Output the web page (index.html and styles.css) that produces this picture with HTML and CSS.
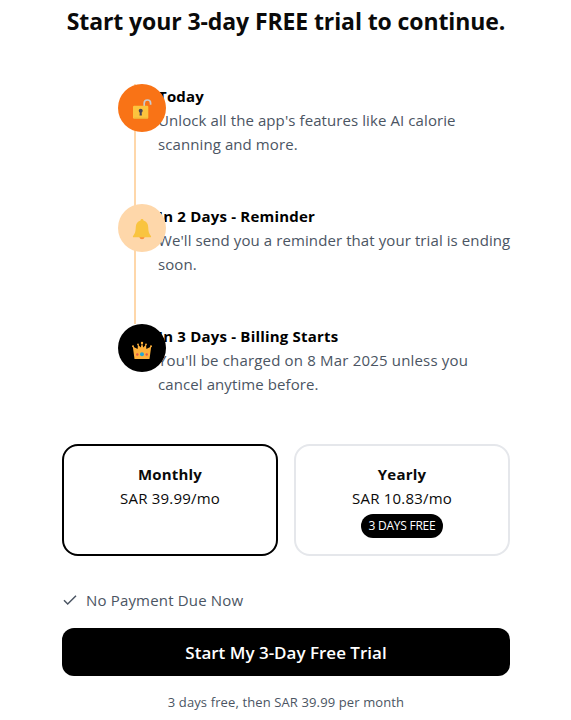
FILE: index.html
```html
<!DOCTYPE html>
<html lang="en">
<head>
<meta charset="utf-8">
<title>Free trial</title>
<link rel="stylesheet" href="styles.css">
</head>
<body>
<main class="page">
  <h1 class="title">Start your 3-day FREE trial to continue.</h1>
  <ol class="timeline">
    <li class="step">
      <span class="dot dot-today">
        <svg width="20" height="24" viewBox="0 0 20 24"><path d="M12.200 11V7.200a3.200 3.200 0 0 1 6.400 0v1.600" fill="none" stroke="#c9cbd0" stroke-width="1.700"/><rect x="1" y="9.800" width="15.300" height="13" rx="1.200" fill="#fcc43e"/><path d="M2 22.200h13.500" stroke="#eeb035"/><circle cx="8.700" cy="14.800" r="2" fill="#494456"/><path d="M8 15h1.500l.4 4.500H7.500z" fill="#494456"/></svg>
      </span>
      <div class="copy"><h2>Today</h2><p>Unlock all the app's features like AI calorie<br>scanning and more.</p></div>
    </li>
    <li class="step">
      <span class="dot dot-reminder">
        <svg width="20" height="24" viewBox="0 0 20 24"><ellipse cx="10" cy="21.500" rx="2.400" ry="1.700" fill="#fb923c"/><path d="M10 3c-1 0-1.500.7-1.500 1.600C5.200 5.400 4 8 3.800 11c-.3 5-.8 6.500-2.600 8.700-.6.9-.3 1.600.6 1.600h16.400c.9 0 1.200-.7.6-1.600-1.800-2.200-2.300-3.700-2.600-8.700-.2-3-1.400-5.600-4.700-6.400C11.500 3.700 11 3 10 3z" fill="#f9c440"/></svg>
      </span>
      <div class="copy"><h2>In 2 Days - Reminder</h2><p>We'll send you a reminder that your trial is ending<br>soon.</p></div>
    </li>
    <li class="step">
      <span class="dot dot-billing">
        <svg width="20" height="24" viewBox="0 -.5 20 24"><path d="M2.500 22.500.8 10l4.800 2.500L6 8l2.700 3L10 6.500l1.300 4.500L14 8l.4 4.500L19.200 10l-1.700 12.500z" fill="#ffb13b"/><g fill="#ffb13b"><circle cx="1" cy="9.700" r="1"/><circle cx="6" cy="8" r=".9"/><circle cx="10" cy="6.500" r="1.200"/><circle cx="14" cy="8" r=".9"/><circle cx="19" cy="9.700" r="1"/></g><circle cx="10" cy="17.700" r="2" fill="#26a6d1"/><circle cx="5.300" cy="18" r="1.200" fill="#e2574c"/><circle cx="14.700" cy="18" r="1.200" fill="#e2574c"/></svg>
      </span>
      <div class="copy"><h2>In 3 Days - Billing Starts</h2><p>You'll be charged on 8 Mar 2025 unless you<br>cancel anytime before.</p></div>
    </li>
  </ol>
  <div class="plans">
    <div class="plan plan-selected"><h3>Monthly</h3><p>SAR 39.99/mo</p></div>
    <div class="plan"><h3>Yearly</h3><p>SAR 10.83/mo</p><span class="badge">3 DAYS FREE</span></div>
  </div>
  <div class="notice">
    <svg width="16" height="16" viewBox="0 0 16 16"><path d="M2 8.300 5.700 12 14 3.700" fill="none" stroke="#4b5563" stroke-width="1.500"/></svg>
    <span>No Payment Due Now</span>
  </div>
  <button class="cta">Start My 3-Day Free Trial</button>
  <p class="footnote">3 days free, then SAR 39.99 per month</p>
</main>
</body>
</html>
```
FILE: styles.css
```css
* { box-sizing: border-box; margin: 0; padding: 0; }
body { background: #fff; color: #0a0a0a; font: 15px/24px "Open Sans", "Noto Sans", sans-serif; letter-spacing: .09px; white-space: nowrap; overflow: hidden; }
.page { width: 448px; margin: 0 0 0 62px; padding-top: 5px; }
.title { font-size: 23px; line-height: 32px; font-weight: 700; text-align: center; letter-spacing: -.1px; }
.timeline { list-style: none; margin: 47px 0 0 56px; color: #000; }
.step { display: flex; height: 120px; background: linear-gradient(#fed7aa, #fed7aa) 16px 0 / 2px 100% no-repeat; }
.step:last-child { background: none; }
.dot { display: flex; flex: none; align-items: center; justify-content: center; width: 48px; height: 48px; border-radius: 50%; z-index: 1; }
.dot svg { display: block; }
.dot-today { background: #f97316; }
.dot-reminder { background: #fed7aa; }
.dot-billing { background: #000; }
.copy { margin-left: -8px; }
h2, h3 { font-size: 15px; line-height: 24px; font-weight: 700; letter-spacing: .2px; }
.copy p, .notice { color: #4b5563; }
.step:last-child p::first-line { letter-spacing: .18px; }
.plans { display: grid; grid-template-columns: 1fr 1fr; gap: 16px; }
.plan { display: flex; flex-direction: column; align-items: center; height: 112px; padding-top: 16px; border: 2px solid #e5e7eb; border-radius: 16px; }
.plan p { letter-spacing: .2px; }
.plan-selected { border-color: #000; }
.badge { width: 82px; height: 24px; margin-top: 4px; border-radius: 12px; background: #000; color: #fff; font-size: 12px; letter-spacing: -.25px; text-align: center; }
.notice { display: flex; align-items: center; gap: 8px; margin-top: 32px; letter-spacing: .17px; }
.cta { display: block; width: 448px; height: 48px; margin-top: 16px; padding-top: 2px; border: 0; border-radius: 12px; background: #000; color: #fff; font: 600 17px/28px "Open Sans", "Noto Sans", sans-serif; }
.footnote { margin-top: 16px; text-align: center; font-size: 13px; line-height: 20px; letter-spacing: .12px; color: #4b5563; }
```
